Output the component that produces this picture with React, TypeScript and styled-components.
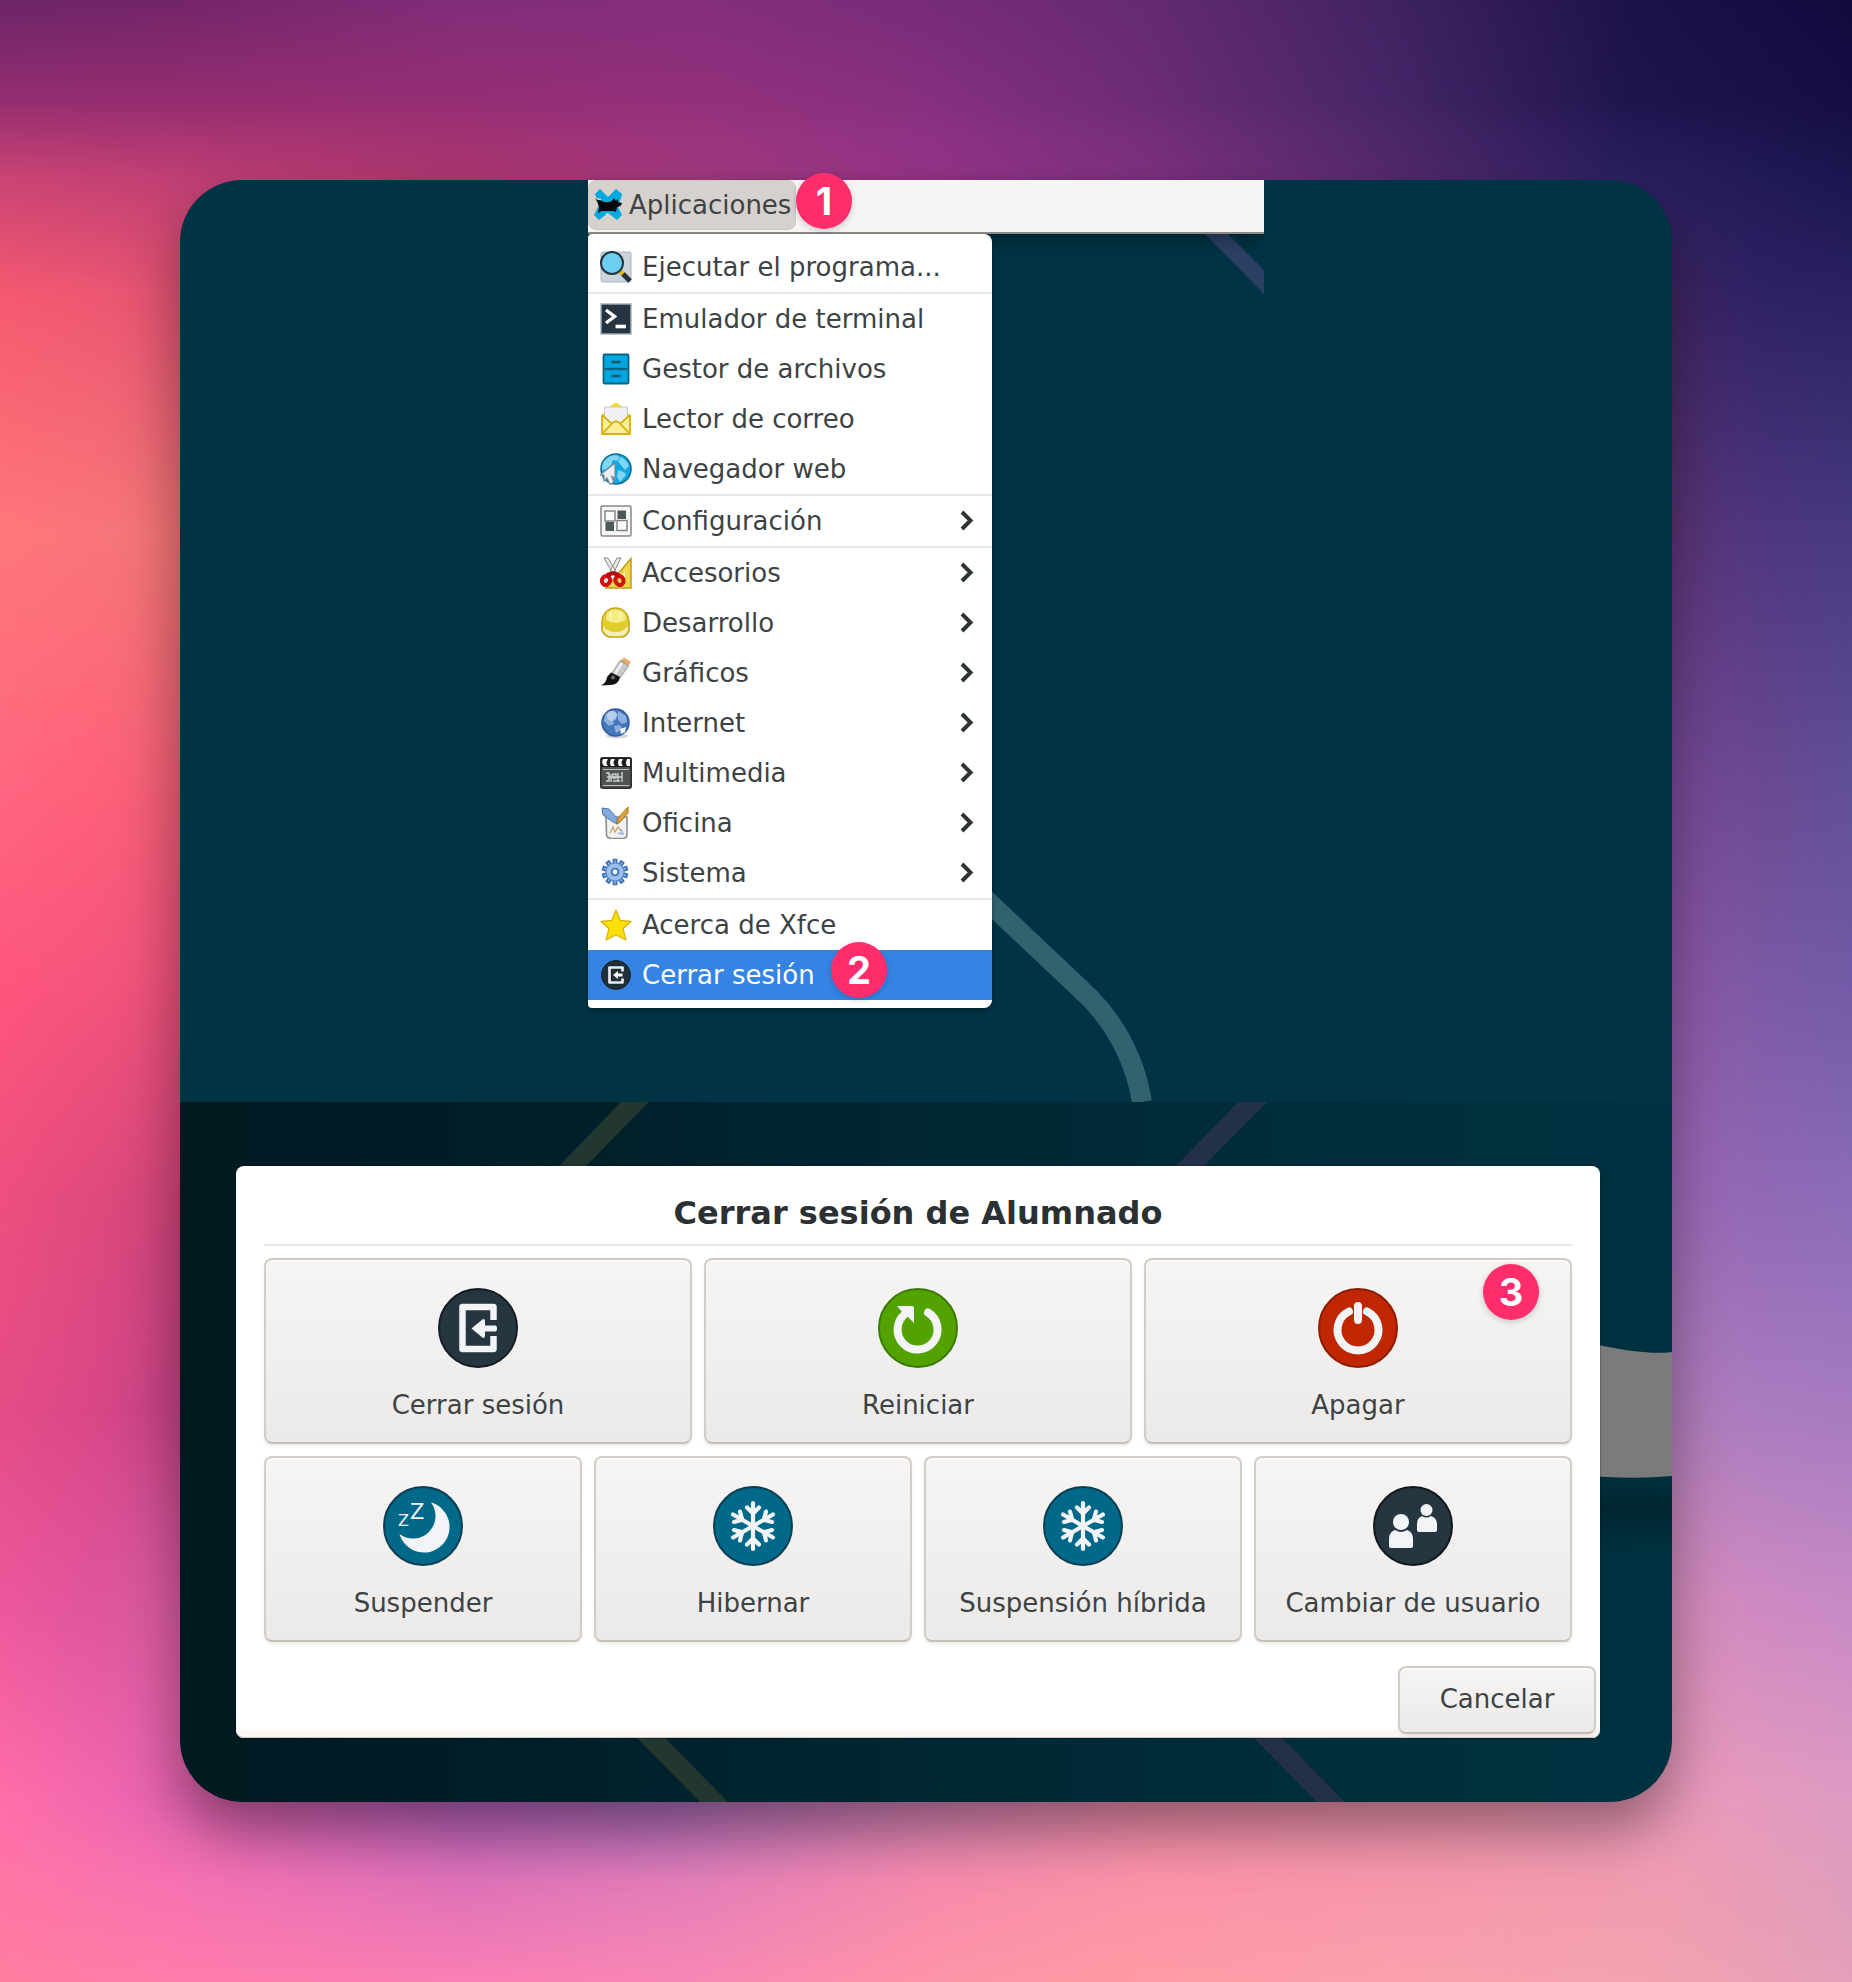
import React from 'react';
import styled, { createGlobalStyle, css } from 'styled-components';

const GlobalStyle = createGlobalStyle`
  *, *::before, *::after { box-sizing: border-box; }
  body { margin: 0; font-family: 'DejaVu Sans', sans-serif; color: #3d4345; }
  button { font: inherit; color: inherit; margin: 0; cursor: pointer; }
`;

/* ---------- backdrop ---------- */

type Stop = [string, number];
interface BandSpec { from: number; to: number; stops: Stop[] }

const bands: BandSpec[] = [
  { from: -1, to: 0, stops: [['#6d2569', 0], ['#74256a', 10], ['#822d7a', 25], ['#842e7c', 38], ['#782c78', 50], ['#652a74', 62], ['#402363', 75], ['#1d124b', 88], ['#120b3e', 100]] },
  { from: 0, to: 5, stops: [['#932e70', 0], ['#952d70', 10], ['#952e74', 25], ['#93307c', 38], ['#86307f', 50], ['#6c2c75', 62], ['#452667', 75], ['#1f154e', 88], ['#150e44', 100]] },
  { from: 5, to: 9, stops: [['#cb4474', 0], ['#c03f74', 10], ['#ad3770', 25], ['#a33a80', 38], ['#98348a', 50], ['#7f3280', 62], ['#552a6c', 75], ['#2a2060', 88], ['#1b174f', 100]] },
  { from: 9, to: 15, stops: [['#f55a70', 0], ['#ee5872', 5], ['#e25372', 10], ['#402663', 90], ['#2f2265', 95], ['#2b2263', 100]] },
  { from: 15, to: 27, stops: [['#ff777b', 0], ['#f9767a', 5], ['#f07575', 10], ['#5c3577', 90], ['#4f3780', 95], ['#483a80', 100]] },
  { from: 27, to: 40, stops: [['#ff6680', 0], ['#ff607a', 5], ['#f05f75', 10], ['#794b99', 90], ['#6b4a92', 95], ['#62509a', 100]] },
  { from: 40, to: 50, stops: [['#ff557d', 0], ['#f5547c', 5], ['#e8507a', 10], ['#9058a6', 90], ['#7c5aa6', 95], ['#735ba8', 100]] },
  { from: 50, to: 60, stops: [['#ee507f', 0], ['#e04a7c', 5], ['#d0457a', 10], ['#9a68b4', 90], ['#9068b5', 95], ['#8a6cb8', 100]] },
  { from: 60, to: 71, stops: [['#e44c86', 0], ['#d94787', 5], ['#c24285', 10], ['#b07cba', 90], ['#a97cc0', 95], ['#a67bc0', 100]] },
  { from: 71, to: 81, stops: [['#ec589c', 0], ['#e0559c', 5], ['#d65ca0', 10], ['#d68cba', 90], ['#ce8ac2', 95], ['#c88ac6', 100]] },
  { from: 81, to: 91, stops: [['#ff6fa9', 0], ['#ee66b0', 7], ['#dc62ae', 12], ['#b660ba', 25], ['#ac6aba', 35], ['#d682b4', 50], ['#ee8cab', 62], ['#f096b0', 80], ['#e89abc', 93], ['#de9bc2', 100]] },
  { from: 91, to: 95, stops: [['#ff76a5', 0], ['#f572b2', 10], ['#de72b8', 25], ['#e47fb8', 38], ['#f68aac', 50], ['#fb93a8', 62], ['#f698ac', 78], ['#f09cb2', 90], ['#df9dbc', 100]] },
  { from: 95, to: 100, stops: [['#ff7ea0', 0], ['#ff7cab', 10], ['#fa7fb4', 25], ['#f888b4', 38], ['#fd94a8', 50], ['#ff9aa4', 60], ['#faa0ac', 75], ['#f4a2ae', 88], ['#e49fba', 100]] },
];

const Stage = styled.div`
  display: grid;
  min-height: 100vh;
  isolation: isolate;
`;

const Band = styled.div<{ $band: BandSpec }>`
  grid-area: 1 / 1;
  ${({ $band }) => css`
    background: linear-gradient(to right, ${$band.stops.map(([c, p]) => `${c} ${p}%`).join(', ')});
    mask-image: linear-gradient(to bottom, transparent ${$band.from}%, #000 ${$band.to}%);
  `}
`;

const Card = styled.main`
  grid-area: 1 / 1;
  margin: 180px;
  border-radius: 62px;
  display: flex;
  flex-direction: column;
  box-shadow: 0 28px 56px rgba(0, 0, 0, 0.38);
  z-index: 1;
`;

const Wallpaper = styled.svg`
  position: absolute;
  inset: 0;
  width: 100%;
  height: 100%;
  border-radius: inherit;
`;

/* ---------- desktop with the applications menu ---------- */

const Desktop = styled.section`
  position: relative;
  padding: 0 408px 94px;
  border-radius: 62px 62px 0 0;
  background: #003343;
`;

const Panel = styled.header`
  position: relative;
  display: flex;
  height: 54px;
  padding-bottom: 2px;
  background: #f6f5f4;
  border-bottom: 2px solid #8d8983;
  box-shadow: 0 6px 14px rgba(0, 0, 0, 0.3);
  clip-path: inset(-20px 0);
`;

const PanelButton = styled.button`
  display: flex;
  align-items: center;
  gap: 4px;
  width: 208px;
  padding: 0 0 0 4px;
  border: 1px solid #cdc7c2;
  border-radius: 8px;
  background: #d6d1cd;
  font-size: 26px;
  line-height: 30px;
`;

const Badge = styled.span<{ $top: number; $left?: number; $right?: number }>`
  position: absolute;
  top: ${(p) => p.$top}px;
  ${(p) => (p.$left !== undefined ? `left: ${p.$left}px;` : `right: ${p.$right}px;`)}
  display: grid;
  place-items: center;
  width: 56px;
  height: 56px;
  border-radius: 50%;
  background: #ff2d6b;
  color: #fff;
  font: 700 38px/56px Inter, sans-serif;
  box-shadow: 0 2px 6px rgba(0, 0, 0, 0.18);
  z-index: 2;
`;

const Menu = styled.ul`
  position: relative;
  width: 404px;
  margin: 0;
  padding: 8px 0;
  list-style: none;
  background: #fff;
  border-radius: 4px 8px 8px 4px;
  box-shadow: 0 2px 4px rgba(0, 0, 0, 0.35);
`;

const MenuRow = styled.li<{ $divided?: boolean }>`
  position: relative;
  border-top: ${(p) => (p.$divided ? '2px solid #e6e6e6' : '0')};
`;

const MenuItem = styled.button<{ $active?: boolean }>`
  display: flex;
  align-items: center;
  gap: 10px;
  width: 100%;
  height: 50px;
  padding: 0 18px 0 12px;
  border: 0;
  background: ${(p) => (p.$active ? '#3584e4' : 'transparent')};
  color: ${(p) => (p.$active ? '#fff' : 'inherit')};
  font-size: 26px;
  line-height: 30px;
  text-align: left;
`;

const MenuLabel = styled.span`
  flex: 1;
`;

const SmallIcon = styled.svg`
  flex: none;
  width: 32px;
  height: 32px;
`;

const Arrow = styled.svg`
  flex: none;
  width: 14px;
  height: 22px;
`;

/* ---------- log-out dialog ---------- */

const Dimmed = styled.section`
  position: relative;
  padding: 64px 72px 64px 56px;
  border-radius: 0 0 62px 62px;
  background: linear-gradient(to right, #001921, #001f28 25%, #002733 50%, #002d3b 75%, #003140);
`;

const Dialog = styled.div`
  position: relative;
  display: flex;
  flex-direction: column;
  padding: 28px 28px 4px;
  border-radius: 8px;
  background: #fff;
  box-shadow: inset 0 -1px #cdc7c2, inset 0 -8px #f9f6f4, 0 0 2px rgba(0, 0, 0, 0.6);
`;

const Title = styled.h1`
  margin: 0 0 12px;
  padding-bottom: 12px;
  border-bottom: 2px solid #e8e8e7;
  color: #2a3033;
  font-size: 32px;
  line-height: 38px;
  font-weight: 700;
  text-align: center;
`;

const Choices = styled.div<{ $columns: number }>`
  display: grid;
  grid-template-columns: repeat(${(p) => p.$columns}, 1fr);
  gap: 12px;
  margin-bottom: 12px;
`;

const raised = css`
  border: 2px solid #d3cdc8;
  border-bottom-color: #c6bfb8;
  border-radius: 8px;
  background: linear-gradient(#f6f5f3, #ebeae8);
  box-shadow: inset 0 2px #fbfaf9, 0 2px 3px rgba(0, 0, 0, 0.08);
  font-size: 26px;
  line-height: 30px;
`;

const Choice = styled.button`
  ${raised}
  position: relative;
  display: flex;
  flex-direction: column;
  align-items: center;
  gap: 22px;
  height: 186px;
  padding: 28px 8px 22px;
`;

const BigIcon = styled.svg`
  flex: none;
  width: 80px;
  height: 80px;
`;

const Footer = styled.footer`
  display: flex;
  justify-content: flex-end;
  margin: 12px -24px 0 0;
`;

const CancelButton = styled.button`
  ${raised}
  width: 198px;
  height: 68px;
  padding: 0 0 2px;
`;

/* ---------- small icons ---------- */

const XfceLogo = () => (
  <SmallIcon viewBox="0 0 32 32" aria-hidden="true">
    <path d="M2 5 7 0 15 8 23 0 29 5 27 12 24 16 29 26 24 31 15 24 6 31 1 26 6 16Z" fill="#00a9e0" />
    <path d="M0 9 8 11M15 0V7M14 24V31" stroke="#d6d1cd" strokeWidth="2" />
    <path d="M2 9Q5 12 7 11Q12 15 19 12L21 9 23 12 25 10 25 13 29 14Q28 18 24 18L23 23 20 22 9 22 5 24 6 18Q5 13 2 9Z" fill="#060a0c" />
  </SmallIcon>
);

const art: Record<string, React.ReactNode> = {
  run: (
    <>
      <rect x="1" y="1" width="30" height="30" rx="2" fill="#ccd3da" stroke="#adb5be" />
      <path d="M20 20 24 24" stroke="#e0b91a" strokeWidth="5" />
      <path d="M23 23 30 30" stroke="#22313c" strokeWidth="5" />
      <circle cx="12" cy="12" r="11" fill="#6ccff0" stroke="#1f3541" strokeWidth="2" />
    </>
  ),
  terminal: (
    <>
      <rect x="1" y="1" width="30" height="30" fill="#243440" stroke="#a5b0b8" strokeWidth="1.4" />
      <path d="M6 7 14.500 13.500 6 20" fill="none" stroke="#fff" strokeWidth="3.400" />
      <path d="M15.500 23.500H26" stroke="#fff" strokeWidth="3.600" />
    </>
  ),
  files: (
    <>
      <rect x="3.5" y="1.5" width="25" height="29" rx="1" fill="#00a7e1" stroke="#0c6384" strokeWidth="1.8" />
      <path d="M4 16H28" stroke="#0c6384" strokeWidth="2.4" />
      <path d="M11.5 9H20.5M11.5 23H20.5" stroke="#1a556c" strokeWidth="2.4" />
    </>
  ),
  mail: (
    <>
      <path d="M1.500 12 13 1Q16-1.500 19 1L30 12V31H1.500Z" fill="#fbdb12" />
      <path d="M4.500 4H27.500V22H4.500Z" fill="#f0f1f5" stroke="#c0c7d2" />
      <path d="M2 12 12 20 16 17.500 20 20 30 12V31H2Z" fill="#fcee98" />
      <path d="M2 12V31H30V12M2 12 11 20M30 12 21 20M2 31 13 19.500Q16 17.500 19 19.500L30 31" fill="none" stroke="#d7b20d" strokeWidth="1.800" />
    </>
  ),
  browser: (
    <>
      <circle cx="16" cy="16" r="15" fill="#12a7e0" stroke="#0f6f96" strokeWidth="1.600" />
      <path d="M4 8Q9 2 16 2L20 4 17 8 13 7 11 12 6 16 2 17Q2 11 4 8ZM21 4Q27 7 29 13L25 17 20 11 18 8ZM18 17 24 19 26 22 20 29 17 24Z" fill="#7fd5f3" />
      <path d="M15 10V26L11.500 23 14 29 10 31.500 7 25 4 28V22H0Z" fill="#eceff1" stroke="#7e8a92" strokeWidth="1.200" />
    </>
  ),
  settings: (
    <>
      <rect x="1" y="1" width="30" height="30" rx="1.500" fill="#f6f6f6" stroke="#888" strokeWidth="1.500" />
      <path d="M17.500 5.500H26V14H17.500ZM5.500 17H14V26H5.500Z" fill="#4d585c" />
      <rect x="5" y="6" width="10" height="10" fill="#fafafa" stroke="#7f7f7f" strokeWidth="1.400" />
      <rect x="17" y="15.500" width="10" height="10" fill="#fafafa" stroke="#7f7f7f" strokeWidth="1.400" />
    </>
  ),
  accessories: (
    <>
      <path d="M31 1.500V31H6Z" fill="#efd44d" stroke="#c49b12" strokeWidth="1.500" />
      <path d="M25 14V24H18Z" fill="#fff6bd" />
      <path d="M4 1 8 1 16 15 13 17ZM21 1 17 1 10 14 13 17Z" fill="#e6e7e6" stroke="#888a85" />
      <ellipse cx="6" cy="23.500" rx="4" ry="4.500" transform="rotate(25 6 23.500)" fill="#f8eee6" stroke="#cf1014" strokeWidth="4" />
      <ellipse cx="19.500" cy="23.500" rx="4" ry="4.500" transform="rotate(-25 19.500 23.500)" fill="#efd44d" stroke="#cf1014" strokeWidth="4" />
      <path d="M7 18 13 16 19 18" fill="none" stroke="#b50c10" strokeWidth="4" />
    </>
  ),
  development: (
    <>
      <path d="M6 5Q10 1 15.500 1T25 5Q29 9 29 18V23Q27 30 20 30H10Q4 29 2 23V17Q2 9 6 5Z" fill="#f5efb4" stroke="#c9a50f" strokeWidth="1.700" />
      <path d="M6 6Q10 2 15.500 2T25 6Q28 10 28 19Q23 25 15.500 25T3 19Q3 10 6 6Z" fill="#e0cc2b" />
      <path d="M7 6Q15-1 24 6 26 10 26 13Q16 19 6 13Z" fill="#f4ec84" />
      <path d="M11 4Q10 8 11 12M20 4Q21 8 20 12" fill="none" stroke="#fbf7c5" strokeWidth="1.500" />
    </>
  ),
  graphics: (
    <>
      <path d="M20 4 24 .5 31 5 28 9Z" fill="#e9a869" />
      <path d="M20 3.500 28.500 9 20 21 12 16Z" fill="#c6c9c6" stroke="#8b8e8b" strokeWidth=".8" />
      <path d="M22 6 15 17" stroke="#f1f2f1" strokeWidth="2.500" />
      <path d="M11 15.500 20 20Q19 27 11 28L1 28.500Q7 25 7 20Z" fill="#111413" />
      <circle cx="13" cy="20.500" r="2" fill="#6b706e" />
    </>
  ),
  internet: (
    <>
      <ellipse cx="17" cy="29" rx="11" ry="2.500" fill="#d4d6d8" />
      <circle cx="15.500" cy="15.500" r="13.500" fill="#4577bd" stroke="#2f5b9f" strokeWidth="1.500" />
      <path d="M5 8Q9 3 15 4L18 8 13 13 14 17 9 19 4 14ZM18 4 26 9 27 15 22 17 18 13ZM14 19 20 18 22 22 16 26Z" fill="#a9c8ec" opacity=".7" />
      <circle cx="12" cy="9" r="5" fill="#d5e5f7" opacity=".6" />
      <path d="M20 22 26 20 25 25 21 27Z" fill="#f2f6fb" />
    </>
  ),
  multimedia: (
    <>
      <rect x=".8" y=".8" width="30.400" height="30.400" rx="2" fill="#4f5352" stroke="#2c302f" strokeWidth="1.600" />
      <path d="M1 1H31V10H1Z" fill="#1c1f1e" />
      <path d="M3 2H8Q5 6 8 9H4Q1 6 3 2ZM11 2H15Q12 6 15 9H11Q9 6 11 2ZM19 2H23Q20 6 23 9H19Q17 6 19 2ZM27 2H30V9H27Q25 6 27 2Z" fill="#f6f6f5" />
      <path d="M3 12.500H29M3 28.500H29" stroke="#b9bcba" strokeWidth="1" />
      <path d="M6 16H9V24H6M11 17V25M13 17H16V21H13ZM18 16V24M22 15V25M7 20H22M13 24H20" fill="none" stroke="#cfd1d0" strokeWidth="1.400" />
    </>
  ),
  office: (
    <>
      <path d="M6 10H27V28Q27 31 23 31.500H11Q7 31 6.500 28Z" fill="#f1f1ef" stroke="#8e908c" strokeWidth="1.600" />
      <path d="M2 1 9 2 17 11 18 17 13 15 3 8Z" fill="#85a9dc" stroke="#4a74b4" />
      <path d="M28 0 28 6 20 15 16 17 19 10Z" fill="#e0a23c" stroke="#a46d13" />
      <path d="M10 26 13 20 15 25 18 20 21 24" fill="none" stroke="#c7a773" strokeWidth="1.300" />
      <path d="M18 26 23 27 21 22" fill="none" stroke="#93b4df" strokeWidth="1.400" />
    </>
  ),
  system: (
    <>
      {[0, 36, 72, 108, 144].map((a) => (
        <path key={a} d="M13.400 2.500H16.600V27.500H13.400Z" transform={`rotate(${a} 15 15)`} fill="#8fb6e6" stroke="#3c70b5" strokeWidth="1.700" />
      ))}
      <circle cx="15" cy="15" r="9" fill="#9dc0ea" stroke="#5a8bcb" strokeWidth="1.200" />
      <circle cx="15" cy="15" r="5" fill="#86aee0" />
      <circle cx="15" cy="15" r="3.200" fill="#fff" stroke="#4174b8" strokeWidth="1.600" />
    </>
  ),
  about: <path d="M16 1 20.300 11.500 31 12.500 23 19.500 26 31 16 26 6 31 9 19.500 1 12.500 11.700 11.500Z" fill="#fbdf0a" stroke="#dbb40b" strokeWidth="1.300" strokeLinejoin="round" />,
  logout: (
    <>
      <circle cx="16" cy="16" r="14.500" fill="#20303a" stroke="#13202a" />
      <path d="M22.500 12.500V8.500H9.500V23.500H22.500V19.500" fill="none" stroke="#e9edf1" strokeWidth="2.700" strokeLinejoin="round" />
      <path d="M13 16 18 12V14.500H22.500V17.500H18V20Z" fill="#fff" />
    </>
  ),
};

interface Entry { icon: string; label: string; submenu?: boolean; divided?: boolean; active?: boolean }

const entries: Entry[] = [
  { icon: 'run', label: 'Ejecutar el programa...' },
  { icon: 'terminal', label: 'Emulador de terminal', divided: true },
  { icon: 'files', label: 'Gestor de archivos' },
  { icon: 'mail', label: 'Lector de correo' },
  { icon: 'browser', label: 'Navegador web' },
  { icon: 'settings', label: 'Configuración', submenu: true, divided: true },
  { icon: 'accessories', label: 'Accesorios', submenu: true, divided: true },
  { icon: 'development', label: 'Desarrollo', submenu: true },
  { icon: 'graphics', label: 'Gráficos', submenu: true },
  { icon: 'internet', label: 'Internet', submenu: true },
  { icon: 'multimedia', label: 'Multimedia', submenu: true },
  { icon: 'office', label: 'Oficina', submenu: true },
  { icon: 'system', label: 'Sistema', submenu: true },
  { icon: 'about', label: 'Acerca de Xfce', divided: true },
  { icon: 'logout', label: 'Cerrar sesión', active: true },
];

/* ---------- dialog icons ---------- */

const Disc = ({ fill, edge, children }: { fill: string; edge: string; children: React.ReactNode }) => (
  <BigIcon viewBox="0 0 80 80" aria-hidden="true">
    <circle cx="40" cy="40" r="39" fill={fill} stroke={edge} strokeWidth="2" />
    {children}
  </BigIcon>
);

const LogoutIcon = () => (
  <Disc fill="#263640" edge="#141d24">
    <path d="M55.500 32V19H24.500V61H55.500V48" fill="none" stroke="#f2f4f8" strokeWidth="6.500" strokeLinejoin="round" />
    <path d="M33.500 40.500 45 31Q47 31 47 33V37.500H57Q59 37.500 59 40.500T57 43.500H47V48Q47 50 45 50Z" fill="#f2f4f8" />
  </Disc>
);

const RestartIcon = () => (
  <Disc fill="#52a300" edge="#3a7a05">
    <path d="M50 24.500A20 20 0 1 1 27 26" fill="none" stroke="#f2f4f8" strokeWidth="8" strokeLinecap="round" />
    <path d="M19 18H34Q36 18 36 20V35L30 29 25 25Z" fill="#f2f4f8" />
  </Disc>
);

const PowerIcon = () => (
  <Disc fill="#c02600" edge="#8d1c02">
    <path d="M31 23.500A20.500 20.500 0 1 0 49 23.500M40 18V32" fill="none" stroke="#f2f4f8" strokeWidth="8" strokeLinecap="round" />
  </Disc>
);

const MoonIcon = () => (
  <Disc fill="#006889" edge="#0a3f52">
    <path d="M48 16.500A25.500 25.500 0 1 1 16.500 48A22.500 22.500 0 0 0 48 16.500Z" fill="#f2f4f8" />
    <text x="27" y="33" fontSize="21" fill="#f2f4f8">Z</text>
    <text x="15" y="40" fontSize="16" fill="#f2f4f8">Z</text>
  </Disc>
);

const SnowIcon = () => (
  <Disc fill="#006889" edge="#0a3f52">
    {[0, 60, 120, 180, 240, 300].map((a) => (
      <path key={a} d="M40 40V17M34 21.500 40 27.500 46 21.500" transform={`rotate(${a} 40 40)`} fill="none" stroke="#f2f4f8" strokeWidth="4.200" strokeLinecap="round" />
    ))}
  </Disc>
);

const UsersIcon = () => (
  <Disc fill="#263640" edge="#11181d">
    <circle cx="28" cy="36" r="8" fill="#f2f4f8" />
    <path d="M22 44Q28 48 34 44 40 46 40 53V60Q40 62 38 62H18Q16 62 16 60V53Q16 46 22 44Z" fill="#f2f4f8" />
    <circle cx="53.500" cy="24" r="6" fill="#f2f4f8" />
    <path d="M49 30Q53.500 33 58 30 64 32 64 38V44Q64 46 62 46H46Q44 46 44 44V38Q44 32 49 30Z" fill="#f2f4f8" />
  </Disc>
);

const DesktopWallpaper = () => (
  <Wallpaper viewBox="0 0 1492 922" preserveAspectRatio="xMidYMid slice" aria-hidden="true">
    <path d="M1025 54H1048L1084 90V114Z" fill="#2b3f64" />
    <path d="M800 714 910 818Q952 862 962 922" fill="none" stroke="#32616f" strokeWidth="20" />
  </Wallpaper>
);

const DimmedWallpaper = () => (
  <Wallpaper viewBox="0 0 1492 700" preserveAspectRatio="xMidYMid slice" aria-hidden="true">
    <defs>
      <linearGradient id="underGrey" x1="0" y1="0" x2="0" y2="1">
        <stop offset="0" stopColor="#00222d" stopOpacity="0" />
        <stop offset=".4" stopColor="#00222d" stopOpacity=".75" />
        <stop offset="1" stopColor="#00222d" stopOpacity="0" />
      </linearGradient>
    </defs>
    <path d="M441 0H469L406 64H379ZM457 636H485L548 700H520Z" fill="#213730" />
    <path d="M1058 0H1087L1024 64H996ZM1074 636H1102L1165 700H1137Z" fill="#233049" />
    <rect x="1400" y="372" width="92" height="80" fill="url(#underGrey)" />
    <path d="M1400 239Q1465 254 1492 250V374Q1450 378 1400 373Z" fill="#7b7b7c" />
  </Wallpaper>
);

const firstRow = [
  { label: 'Cerrar sesión', Icon: LogoutIcon },
  { label: 'Reiniciar', Icon: RestartIcon },
  { label: 'Apagar', Icon: PowerIcon, step: 3 },
];

const secondRow = [
  { label: 'Suspender', Icon: MoonIcon },
  { label: 'Hibernar', Icon: SnowIcon },
  { label: 'Suspensión híbrida', Icon: SnowIcon },
  { label: 'Cambiar de usuario', Icon: UsersIcon },
];

export default function App() {
  return (
    <>
      <GlobalStyle />
      <Stage>
        {bands.map((band) => (
          <Band key={band.to} $band={band} />
        ))}
        <Card>
          <Desktop>
            <DesktopWallpaper />
            <Panel>
              <PanelButton type="button" aria-haspopup="menu" aria-expanded="true">
                <XfceLogo />
                Aplicaciones
              </PanelButton>
              <Badge $top={-7} $left={208}>1</Badge>
            </Panel>
            <Menu>
              {entries.map((entry) => (
                <MenuRow key={entry.label} $divided={entry.divided}>
                  <MenuItem type="button" $active={entry.active}>
                    <SmallIcon viewBox="0 0 32 32" aria-hidden="true">{art[entry.icon]}</SmallIcon>
                    <MenuLabel>{entry.label}</MenuLabel>
                    {entry.submenu && (
                      <Arrow viewBox="0 0 14 22" aria-hidden="true">
                        <path d="M2 2 10.500 10.500 2 19" fill="none" stroke="#2e3436" strokeWidth="4" />
                      </Arrow>
                    )}
                  </MenuItem>
                  {entry.active && <Badge $top={-8} $left={243}>2</Badge>}
                </MenuRow>
              ))}
            </Menu>
          </Desktop>
          <Dimmed>
            <DimmedWallpaper />
            <Dialog role="dialog" aria-labelledby="dialog-title">
              <Title id="dialog-title">Cerrar sesión de Alumnado</Title>
              <Choices $columns={3}>
                {firstRow.map(({ label, Icon, step }) => (
                  <Choice key={label} type="button">
                    <Icon />
                    {label}
                    {step && <Badge $top={4} $right={31}>{step}</Badge>}
                  </Choice>
                ))}
              </Choices>
              <Choices $columns={4}>
                {secondRow.map(({ label, Icon }) => (
                  <Choice key={label} type="button">
                    <Icon />
                    {label}
                  </Choice>
                ))}
              </Choices>
              <Footer>
                <CancelButton type="button">Cancelar</CancelButton>
              </Footer>
            </Dialog>
          </Dimmed>
        </Card>
      </Stage>
    </>
  );
}
